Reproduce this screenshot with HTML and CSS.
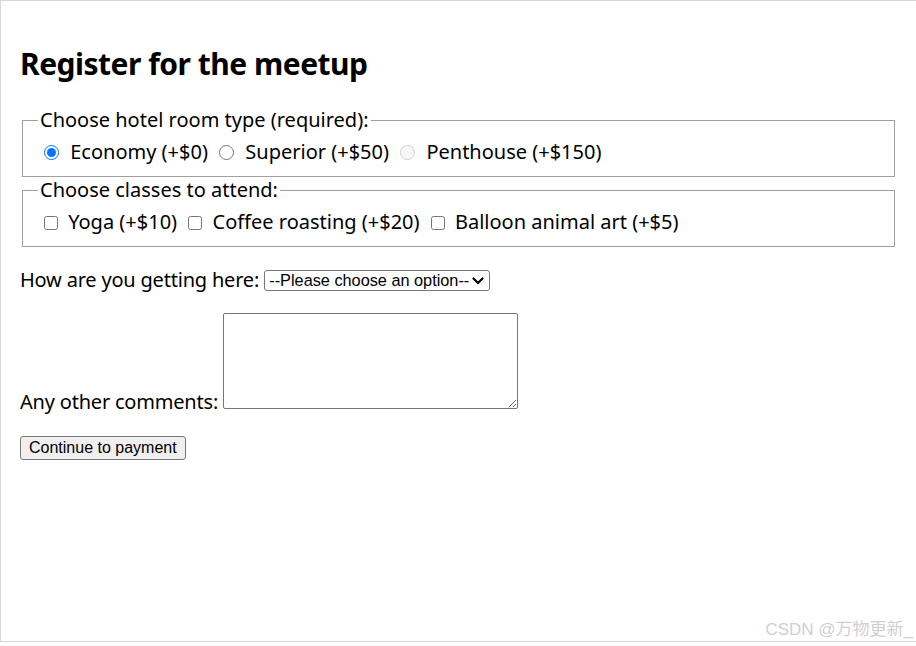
FILE: index.html
```html
<!DOCTYPE html>
<html lang="en">
<head>
<meta charset="utf-8">
<title>Register for the meetup</title>
<link rel="stylesheet" href="styles.css">
</head>
<body>
<div class="frame">
  <h1 class="title">Register for the meetup</h1>
  <form class="form">
    <fieldset class="group">
      <legend class="group-legend">Choose hotel room type (required):</legend>
      <div class="options">
        <input class="radio" type="radio" id="economy" name="hotel" checked> <label for="economy">Economy (+$0)</label>
        <input class="radio" type="radio" id="superior" name="hotel"> <label for="superior">Superior (+$50)</label>
        <input class="radio" type="radio" id="penthouse" name="hotel" disabled> <label for="penthouse">Penthouse (+$150)</label>
      </div>
    </fieldset>
    <fieldset class="group">
      <legend class="group-legend">Choose classes to attend:</legend>
      <div class="options">
        <input class="check" type="checkbox" id="yoga"> <label for="yoga">Yoga (+$10)</label>
        <input class="check" type="checkbox" id="coffee"> <label for="coffee">Coffee roasting (+$20)</label>
        <input class="check" type="checkbox" id="balloon"> <label for="balloon">Balloon animal art (+$5)</label>
      </div>
    </fieldset>
    <p class="field">
      <label class="field-label" for="transport">How are you getting here:</label>
      <span class="select-wrap">
        <select class="select" id="transport">
          <option>--Please choose an option--</option>
          <option>Car</option>
          <option>Bus</option>
          <option>Train</option>
        </select>
        <svg class="select-arrow" width="12" height="8" viewBox="0 0 12 8" aria-hidden="true">
          <path d="M1.5 1.5 L6 6 L10.5 1.5" fill="none" stroke="#000" stroke-width="2.2" stroke-linecap="round" stroke-linejoin="round"/>
        </svg>
      </span>
    </p>
    <p class="field">
      <label class="field-label" for="comments">Any other comments:</label>
      <textarea class="textarea" id="comments"></textarea>
    </p>
    <p class="field field-button">
      <button class="button" type="button">Continue to payment</button>
    </p>
  </form>
  <div class="watermark">CSDN @万物更新_</div>
</div>
</body>
</html>
```

FILE: styles.css
```css
html, body {
  margin: 0;
  padding: 0;
  background: #ffffff;
}

.frame {
  position: relative;
  box-sizing: border-box;
  width: 916px;
  height: 642px;
  border-top: 1px solid #d6d6d6;
  border-left: 1px solid #d6d6d6;
  border-bottom: 1px solid #d6d6d6;
  padding: 43px 19px 0 19px;
  font-family: "Noto Sans", "Open Sans", sans-serif;
  font-size: 20px;
  line-height: 26px;
  color: #000000;
}

.title {
  margin: 0 0 23px 0;
  font-size: 30px;
  line-height: 40px;
  font-weight: 700;
  letter-spacing: -0.5px;
}

.form {
  margin: 0;
}

.group {
  margin: 0 2px;
  padding: 6px 15px 11px 15px;
  border: 1px solid #a0a0a0;
  min-width: 0;
}

.group-legend {
  padding: 0 2px;
  line-height: 26px;
}

.options {
  line-height: 26px;
}

.radio {
  width: 15px;
  height: 15px;
  margin: 0 6px 0 6px;
  vertical-align: -1px;
  accent-color: #0075ff;
}

.check {
  width: 14px;
  height: 14px;
  margin: 0 5px 0 6px;
  vertical-align: -1px;
}

.field {
  margin: 20px 0 0 0;
}

.field-label {
  letter-spacing: -0.2px;
}

.field-button {
  margin-top: 18px;
}

.select-wrap {
  position: relative;
  display: inline-block;
  vertical-align: 1px;
  line-height: 0;
}

.select {
  -webkit-appearance: none;
  appearance: none;
  box-sizing: border-box;
  width: 226px;
  height: 21px;
  margin: 0;
  padding: 0 20px 0 4px;
  font-family: "Liberation Sans", Arial, sans-serif;
  font-size: 16.3px;
  line-height: 19px;
  color: #000000;
  background: #ffffff;
  border: 1px solid #767676;
  border-radius: 3px;
}

.select-arrow {
  position: absolute;
  right: 6px;
  top: 7px;
  pointer-events: none;
}

.textarea {
  box-sizing: border-box;
  width: 295px;
  height: 96px;
  margin: 0;
  border: 1px solid #767676;
  border-radius: 2px;
  vertical-align: baseline;
  font-family: "Liberation Mono", monospace;
  font-size: 16px;
}

.button {
  box-sizing: border-box;
  height: 24px;
  margin: 0;
  padding: 0 8px;
  font-family: "Liberation Sans", Arial, sans-serif;
  font-size: 16px;
  color: #000000;
  background: #efefef;
  border: 1px solid #767676;
  border-radius: 3px;
}

.watermark {
  position: absolute;
  right: 3px;
  bottom: 1px;
  font-family: "Liberation Sans", "Noto Sans CJK SC", sans-serif;
  font-size: 17px;
  line-height: 20px;
  color: #cfcfcf;
}
```
